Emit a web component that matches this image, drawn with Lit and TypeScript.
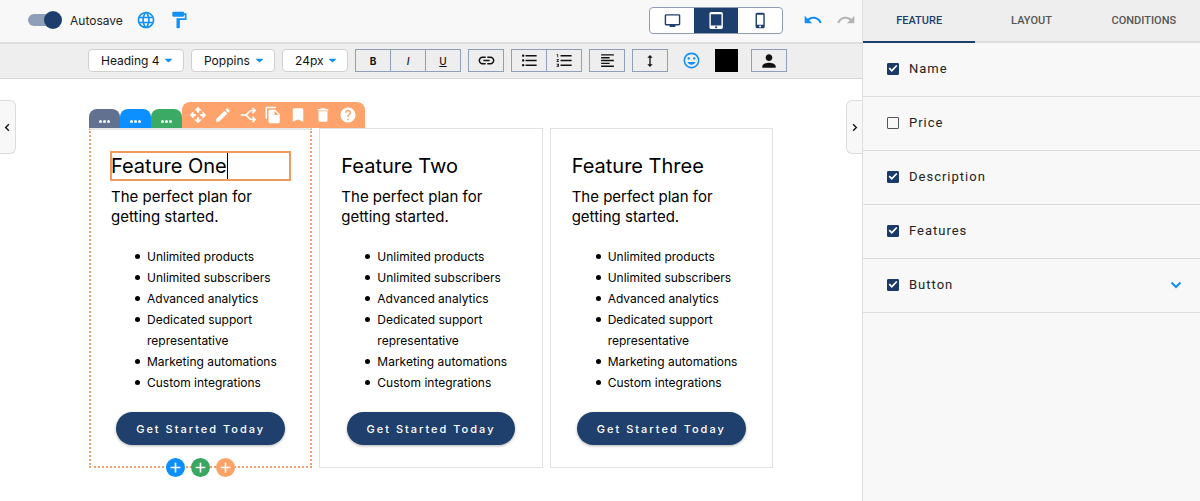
import { LitElement, html, css, svg, nothing } from "lit";
import { customElement, property, state } from "lit/decorators.js";
import { classMap } from "lit/directives/class-map.js";

const paths: Record<string, string> = {
  globe:
    "M11.99 2C6.47 2 2 6.48 2 12s4.47 10 9.99 10C17.52 22 22 17.52 22 12S17.52 2 11.99 2zm6.93 6h-2.95c-.32-1.25-.78-2.45-1.38-3.56 1.84.63 3.37 1.91 4.33 3.56zM12 4.04c.83 1.2 1.48 2.53 1.91 3.96h-3.82c.43-1.43 1.08-2.76 1.91-3.96zM4.26 14C4.1 13.36 4 12.69 4 12s.1-1.36.26-2h3.38c-.08.66-.14 1.32-.14 2 0 .68.06 1.34.14 2H4.26zm.82 2h2.95c.32 1.25.78 2.45 1.38 3.56-1.84-.63-3.37-1.9-4.33-3.56zm2.95-8H5.08c.96-1.66 2.49-2.93 4.33-3.56C8.81 5.55 8.35 6.75 8.03 8zM12 19.96c-.83-1.2-1.48-2.53-1.91-3.96h3.82c-.43 1.43-1.08 2.76-1.91 3.96zM14.34 14H9.66c-.09-.66-.16-1.32-.16-2 0-.68.07-1.35.16-2h4.68c.09.65.16 1.32.16 2 0 .68-.07 1.34-.16 2zm.25 5.56c.6-1.11 1.06-2.31 1.38-3.56h2.95c-.96 1.65-2.49 2.93-4.33 3.56zM16.36 14c.08-.66.14-1.32.14-2 0-.68-.06-1.34-.14-2h3.38c.16.64.26 1.31.26 2s-.1 1.36-.26 2h-3.38z",
  paint:
    "M18 4V3c0-.55-.45-1-1-1H5c-.55 0-1 .45-1 1v4c0 .55.45 1 1 1h12c.55 0 1-.45 1-1V6h1v4H9v11c0 .55.45 1 1 1h2c.55 0 1-.45 1-1v-9h8V4h-3z",
  undo: "M12.5 8c-2.65 0-5.05.99-6.9 2.6L2 7v9h9l-3.62-3.62c1.39-1.16 3.16-1.88 5.12-1.88 3.54 0 6.55 2.31 7.6 5.5l2.37-.78C21.08 11.03 17.15 8 12.5 8z",
  redo: "M18.4 10.6C16.55 8.99 14.15 8 11.5 8c-4.65 0-8.58 3.03-9.96 7.22L3.9 16c1.05-3.19 4.05-5.5 7.6-5.5 1.95 0 3.73.72 5.12 1.88L13 16h9V7l-3.6 3.6z",
  desktop:
    "M21 3H3c-1.1 0-2 .9-2 2v12c0 1.1.9 2 2 2h5v2h8v-2h5c1.1 0 2-.9 2-2V5c0-1.1-.9-2-2-2zm0 14H3V5h18v12z",
  tablet:
    "M18.5 0h-14C3.12 0 2 1.12 2 2.5v19C2 22.88 3.12 24 4.5 24h14c1.38 0 2.5-1.12 2.5-2.5v-19C21 1.12 19.88 0 18.5 0zm-7 23c-.83 0-1.5-.67-1.5-1.5s.67-1.5 1.5-1.5 1.5.67 1.5 1.5-.67 1.5-1.5 1.5zm7.5-4H4V3h15v16z",
  phone:
    "M15.5 1h-8C6.12 1 5 2.12 5 3.5v17C5 21.88 6.12 23 7.5 23h8c1.38 0 2.5-1.12 2.5-2.5v-17C18 2.12 16.88 1 15.5 1zm-4 21c-.83 0-1.5-.67-1.5-1.5s.67-1.5 1.5-1.5 1.5.67 1.5 1.5-.67 1.5-1.5 1.5zm4.5-4H7V4h9v14z",
  link: "M3.9 12c0-1.71 1.39-3.1 3.1-3.1h4V7H7c-2.76 0-5 2.24-5 5s2.24 5 5 5h4v-1.9H7c-1.71 0-3.1-1.39-3.1-3.1zM8 13h8v-2H8v2zm9-6h-4v1.9h4c1.71 0 3.1 1.39 3.1 3.1s-1.39 3.1-3.1 3.1h-4V17h4c2.76 0 5-2.24 5-5s-2.24-5-5-5z",
  bullets:
    "M4 10.5c-.83 0-1.5.67-1.5 1.5s.67 1.5 1.5 1.5 1.5-.67 1.5-1.5-.67-1.5-1.5-1.5zm0-6c-.83 0-1.5.67-1.5 1.5S3.17 7.5 4 7.5 5.5 6.83 5.5 6 4.83 4.5 4 4.5zm0 12c-.83 0-1.5.68-1.5 1.5s.68 1.5 1.5 1.5 1.5-.68 1.5-1.5-.67-1.5-1.5-1.5zM7 19h14v-2H7v2zm0-6h14v-2H7v2zm0-8v2h14V5H7z",
  numbers:
    "M2 17h2v.5H3v1h1v.5H2v1h3v-4H2v1zm1-9h1V4H2v1h1v3zm-1 3h1.8L2 13.1v.9h3v-1H3.2L5 10.9V10H2v1zm5-6v2h14V5H7zm0 14h14v-2H7v2zm0-6h14v-2H7v2z",
  align:
    "M15 15H3v2h12v-2zm0-8H3v2h12V7zM3 13h18v-2H3v2zm0 8h18v-2H3v2zM3 3v2h18V3H3z",
  height: "M13 6.99h3L12 3 8 6.99h3v10.02H8L12 21l4-3.99h-3z",
  smile:
    "M11.99 2C6.47 2 2 6.48 2 12s4.47 10 9.99 10C17.52 22 22 17.52 22 12S17.52 2 11.99 2zM12 20c-4.42 0-8-3.58-8-8s3.58-8 8-8 8 3.58 8 8-3.58 8-8 8zm3.5-9c.83 0 1.5-.67 1.5-1.5S16.33 8 15.5 8 14 8.67 14 9.5s.67 1.5 1.5 1.5zm-7 0c.83 0 1.5-.67 1.5-1.5S9.33 8 8.5 8 7 8.67 7 9.5 7.67 11 8.5 11zm3.5 6.5c2.33 0 4.31-1.46 5.11-3.5H6.89c.8 2.04 2.78 3.5 5.11 3.5z",
  person:
    "M12 12c2.21 0 4-1.79 4-4s-1.79-4-4-4-4 1.79-4 4 1.79 4 4 4zm0 2c-2.67 0-8 1.34-8 4v2h16v-2c0-2.66-5.33-4-8-4z",
  move: "M12 1l5 5h-3.5v3h-3V6H7zM12 23l-5-5h3.5v-3h3v3H17zM1 12l5-5v3.5h3v3H6V17zM23 12l-5 5v-3.5h-3v-3h3V7z",
  pencil:
    "M3 17.25V21h3.75L17.81 9.94l-3.75-3.75L3 17.25zM20.71 7.04c.39-.39.39-1.02 0-1.41l-2.34-2.34c-.39-.39-1.02-.39-1.41 0l-1.83 1.83 3.75 3.75 1.83-1.83z",
  copy: "M16 1H4c-1.1 0-2 .9-2 2v14h2V3h12V1zm-1 4l6 6v10c0 1.1-.9 2-2 2H7.99C6.89 23 6 22.1 6 21l.01-14c0-1.1.89-2 1.99-2h7zm-1 7h5.5L14 6.5V12z",
  bookmark: "M17 3H7c-1.1 0-1.99.9-1.99 2L5 21l7-3 7 3V5c0-1.1-.9-2-2-2z",
  trash:
    "M6 19c0 1.1.9 2 2 2h8c1.1 0 2-.9 2-2V7H6v12zM19 4h-3.5l-1-1h-5l-1 1H5v2h14V4z",
  help: "M12 2C6.48 2 2 6.48 2 12s4.48 10 10 10 10-4.48 10-10S17.52 2 12 2zm1 17h-2v-2h2v2zm2.07-7.75l-.9.92C13.45 12.9 13 13.5 13 15h-2v-.5c0-1.1.45-2.1 1.17-2.83l1.24-1.26c.37-.36.59-.86.59-1.41 0-1.1-.9-2-2-2s-2 .9-2 2H8c0-2.21 1.79-4 4-4s4 1.79 4 4c0 .88-.36 1.68-.93 2.25z",
  caret: "M4 7c-1.2 0-1.7 1.2-.8 2l7.2 7c.9.8 2.300.8 3.200 0l7.200-7c.9-.8.4-2-.8-2z",
};

const strokes: Record<string, string> = {
  split: "M2 12h6c4 0 4-6 9-6h4M8 12c4 0 4 6 9 6h4M18 2.5L21.5 6 18 9.5M18 14.5l3.5 3.5-3.5 3.5",
  left: "M15 5l-7 7 7 7",
  right: "M9 5l7 7-7 7",
  down: "M3 7l9 9 9-9",
  plus: "M12 3v18M3 12h18",
};

function icon(name: string, size: number, weight = 2.5) {
  return html`<svg width=${size} height=${size} viewBox="0 0 24 24" aria-hidden="true">
    ${name in paths
      ? svg`<path fill="currentColor" d=${paths[name]}></path>`
      : svg`<path fill="none" stroke="currentColor" stroke-width=${weight} d=${strokes[name]}></path>`}
  </svg>`;
}

const base = css`
  * {
    box-sizing: border-box;
  }
  svg {
    display: block;
    flex: none;
  }
  button {
    margin: 0;
    padding: 0;
    border: 0;
    background: none;
    color: inherit;
    font: inherit;
    cursor: pointer;
    display: flex;
    align-items: center;
    justify-content: center;
  }
`;

@customElement("top-bar")
class TopBar extends LitElement {
  @state() device = "tablet";

  static styles = [
    base,
    css`
      :host {
        display: flex;
        align-items: center;
        height: 44px;
        padding: 0 6px 2px 28px;
        background: #f8f8f8;
        border-bottom: 2px solid #dedede;
      }
      .autosave {
        display: flex;
        align-items: center;
        gap: 8px;
        font-size: 12px;
        color: #222;
      }
      .switch {
        appearance: none;
        position: relative;
        width: 34px;
        height: 18px;
        margin: 0;
      }
      .switch::before {
        content: "";
        position: absolute;
        inset: 3px 4px 3px 0;
        border-radius: 6px;
        background: #8e9fb7;
      }
      .switch::after {
        content: "";
        position: absolute;
        right: 0;
        top: 0;
        width: 18px;
        height: 18px;
        border-radius: 50%;
        background: #1e3f6e;
      }
      .switch:not(:checked)::after {
        right: 16px;
      }
      .tools {
        display: flex;
        gap: 13px;
        margin-left: 13px;
        color: #1290f5;
      }
      .devices {
        display: flex;
        margin-left: auto;
        border: 1px solid #8e9db5;
        border-radius: 4px;
        color: #1e3f6e;
        background: #fff;
        overflow: hidden;
      }
      .devices button {
        width: 44px;
        height: 25px;
      }
      .devices .on {
        background: #1c3f6e;
        color: #fff;
      }
      .history {
        display: flex;
        gap: 13px;
        margin-left: 20px;
        color: #1290f5;
      }
      .history button:disabled {
        color: #b5b5b5;
      }
    `,
  ];

  render() {
    return html`
      <label class="autosave"><input class="switch" type="checkbox" role="switch" checked />Autosave</label>
      <div class="tools">
        <button aria-label="Language">${icon("globe", 20)}</button>
        <button aria-label="Styles">${icon("paint", 20)}</button>
      </div>
      <div class="devices">
        ${["desktop", "tablet", "phone"].map(
          (d) => html`<button
            aria-label=${d}
            class=${classMap({ on: this.device === d })}
            @click=${() => (this.device = d)}
          >
            ${icon(d, 17)}
          </button>`
        )}
      </div>
      <div class="history">
        <button aria-label="Undo">${icon("undo", 20)}</button>
        <button aria-label="Redo" disabled>${icon("redo", 20)}</button>
      </div>
    `;
  }
}

@customElement("format-bar")
class FormatBar extends LitElement {
  static styles = [
    base,
    css`
      :host {
        display: flex;
        align-items: center;
        gap: 7px;
        height: 35px;
        padding: 0 74px 1px 88px;
        background: #eee;
        border-bottom: 1px solid #d6d6d6;
        color: #111;
      }
      .pick {
        display: grid;
        align-items: center;
      }
      .pick select,
      .pick svg {
        grid-area: 1 / 1;
      }
      .pick svg {
        justify-self: end;
        margin-right: 11px;
        color: #1290f5;
        pointer-events: none;
      }
      select {
        appearance: none;
        height: 23px;
        padding: 0 0 0 12px;
        border: 1px solid #cfcfcf;
        border-radius: 4px;
        background: #fff;
        color: #111;
        font: 12px/20px Inter, sans-serif;
      }
      .block {
        width: 96px;
      }
      .family {
        width: 84px;
      }
      .size {
        width: 66px;
      }
      .group {
        display: flex;
        border: 1px solid #8f9fb8;
      }
      .group button {
        width: 34px;
        height: 21px;
        font-size: 10px;
        font-weight: 500;
      }
      .group button + button {
        width: 35px;
        border-left: 1px solid #8f9fb8;
      }
      .group .bold {
        font-weight: 700;
      }
      .italic {
        font-style: italic;
      }
      .under {
        text-decoration: underline;
      }
      .emoji {
        margin: 0 7px;
        color: #1290f5;
      }
      .color {
        width: 23px;
        height: 23px;
        margin-right: 6px;
        background: #000;
      }
    `,
  ];

  pick(kind: string, label: string, value: string) {
    return html`<span class="pick">
      <select class=${kind} aria-label=${label}>
        <option>${value}</option>
      </select>
      ${icon("caret", 9)}
    </span>`;
  }

  tool(label: string, name: string, size = 19) {
    return html`<button aria-label=${label}>${icon(name, size)}</button>`;
  }

  render() {
    return html`
      ${this.pick("block", "Block style", "Heading 4")} ${this.pick("family", "Font", "Poppins")}
      ${this.pick("size", "Font size", "24px")}
      <div class="group">
        <button class="bold">B</button>
        <button class="italic">I</button>
        <button class="under">U</button>
      </div>
      <div class="group">${this.tool("Link", "link")}</div>
      <div class="group">${this.tool("Bulleted list", "bullets")}${this.tool("Numbered list", "numbers")}</div>
      <div class="group">${this.tool("Align", "align", 17)}</div>
      <div class="group">${this.tool("Line height", "height", 16)}</div>
      <button class="emoji" aria-label="Emoji">${icon("smile", 19)}</button>
      <button class="color" aria-label="Text colour"></button>
      <div class="group">${this.tool("Personalise", "person", 20)}</div>
    `;
  }
}

@customElement("plan-card")
class PlanCard extends LitElement {
  @property() name = "";
  @property({ type: Boolean }) selected = false;

  static styles = [
    base,
    css`
      :host {
        display: block;
        position: relative;
        padding: 23px 21px 22px;
        border: 1px solid #e2e2e2;
        background: #fff;
        color: #000;
      }
      :host([selected]) {
        padding: 22px 20px 21px;
        border: 2px dotted #f0a070;
        border-top-color: #e8e8e8;
        border-top-style: solid;
      }
      .name {
        margin: 0 0 7px;
        font-size: 20px;
        font-weight: 400;
        line-height: 28px;
      }
      .editing {
        display: flex;
        align-items: center;
        outline: 2px solid #f09a60;
        outline-offset: -1px;
      }
      .cursor {
        width: 1px;
        height: 26px;
        background: #000;
      }
      .text {
        margin: 0 0 19px;
        font-size: 15px;
        line-height: 20px;
        max-width: 152px;
      }
      ul {
        margin: 0 0 19px;
        padding: 0 0 0 36px;
        list-style: none;
        font-size: 12px;
        line-height: 21px;
      }
      li {
        display: flex;
        gap: 7px;
        margin-left: -12px;
      }
      li::before {
        content: "";
        flex: none;
        width: 5px;
        height: 5px;
        margin-top: 8px;
        border-radius: 50%;
        background: #000;
      }
      .cta {
        height: 33px;
        padding: 0 20px;
        margin: 0 auto;
        border-radius: 17px;
        background: #1f3f6c;
        color: #fff;
        font-size: 11px;
        font-weight: 500;
        letter-spacing: 2px;
        white-space: nowrap;
        box-shadow: 0 1px 3px rgba(0, 0, 0, 0.3);
      }
      .adders {
        position: absolute;
        left: 0;
        right: 0;
        bottom: -11px;
        display: flex;
        justify-content: center;
        gap: 6px;
        color: #fff;
      }
      .adders button {
        width: 19px;
        height: 19px;
        border-radius: 50%;
      }
      .row {
        background: #0c90ff;
      }
      .column {
        background: #3aa660;
      }
      .element {
        background: #ffa268;
      }
    `,
  ];

  render() {
    return html`
      ${this.selected
        ? html`<h4 class="name editing" contenteditable="true" spellcheck="false">${this.name}<span class="cursor"></span></h4>`
        : html`<h4 class="name">${this.name}</h4>`}
      <p class="text">The perfect plan for getting started.</p>
      <ul>
        ${[
          "Unlimited products",
          "Unlimited subscribers",
          "Advanced analytics",
          "Dedicated support representative",
          "Marketing automations",
          "Custom integrations",
        ].map((t) => html`<li>${t}</li>`)}
      </ul>
      <button class="cta">Get Started Today</button>
      ${this.selected
        ? html`<div class="adders">
            ${["row", "column", "element"].map(
              (k) => html`<button class=${k} aria-label="Add ${k}">${icon("plus", 13, 3)}</button>`
            )}
          </div>`
        : nothing}
    `;
  }
}

@customElement("side-panel")
class SidePanel extends LitElement {
  static styles = [
    base,
    css`
      :host {
        display: block;
        background: #f8f8f8;
        border-left: 1px solid #dedede;
        font-family: Roboto, sans-serif;
      }
      .tabs {
        display: grid;
        grid-template-columns: repeat(3, 1fr);
        height: 43px;
        background: #eee;
      }
      .tabs button {
        border-bottom: 2px solid #dedede;
        color: #555;
        font-size: 11px;
        font-weight: 500;
      }
      .tabs .on {
        border-bottom-color: #1c3f6e;
        color: #1c3f6e;
      }
      .row {
        display: flex;
        align-items: center;
        justify-content: space-between;
        height: 54px;
        padding: 0 18px 2px 24px;
        border-bottom: 1px solid #dcdcdc;
      }
      label {
        display: flex;
        align-items: center;
        gap: 10px;
        font-size: 13px;
        letter-spacing: 1px;
        color: #222;
      }
      input {
        appearance: none;
        width: 12px;
        height: 12px;
        margin: 0;
        border: 1px solid #555;
        border-radius: 1px;
        display: grid;
      }
      input:checked {
        border-color: #1a3a6a;
        background: #1a3a6a;
      }
      input:checked::before {
        content: "";
        background: #fff;
        clip-path: polygon(6% 52%, 18% 40%, 38% 60%, 82% 14%, 94% 26%, 38% 84%);
      }
      .more {
        color: #1290f5;
      }
    `,
  ];

  render() {
    return html`
      <div class="tabs" role="tablist">
        <button class="on" role="tab" aria-selected="true">FEATURE</button>
        <button role="tab">LAYOUT</button>
        <button role="tab">CONDITIONS</button>
      </div>
      ${["Name", "Price", "Description", "Features", "Button"].map(
        (name) => html`<div class="row">
          <label><input type="checkbox" ?checked=${name !== "Price"} />${name}</label>
          ${name === "Button"
            ? html`<button class="more" aria-label="Button options">${icon("down", 12, 4)}</button>`
            : nothing}
        </div>`
      )}
    `;
  }
}

@customElement("app-root")
class AppRoot extends LitElement {
  static styles = [
    base,
    css`
      :host {
        display: grid;
        grid-template-columns: minmax(0, 1fr) 338px;
        min-height: 100vh;
        background: #fff;
        font-family: Inter, sans-serif;
      }
      main {
        min-width: 0;
      }
      .canvas {
        position: relative;
        padding: 23px 89px 24px;
      }
      .drawer {
        position: absolute;
        top: 21px;
        width: 16px;
        height: 54px;
        border: 1px solid #dcdcdc;
        background: #f8f8f8;
        color: #111;
      }
      .first {
        left: 0;
        border-left: 0;
        border-radius: 0 6px 6px 0;
      }
      .last {
        right: 0;
        border-right: 0;
        border-radius: 6px 0 0 6px;
      }
      .strip {
        display: flex;
        align-items: flex-end;
        height: 26px;
        color: #fff;
      }
      .tab {
        width: 31px;
        height: 19px;
        padding-top: 5px;
        border-radius: 8px 8px 0 0;
        gap: 1px;
      }
      .tab i {
        width: 3px;
        height: 3px;
        border-radius: 50%;
        background: #fff;
      }
      .section {
        background: #62718f;
      }
      .row {
        background: #0c90ff;
      }
      .column {
        background: #3aaa64;
      }
      .actions {
        display: flex;
        align-items: center;
        gap: 7px;
        height: 26px;
        padding: 0 8px 0 7px;
        border-radius: 8px 8px 0 0;
        background: #ffa36c;
      }
      .plans {
        display: grid;
        grid-template-columns: repeat(3, minmax(0, 1fr));
        gap: 7px;
      }
    `,
  ];

  render() {
    return html`
      <main>
        <top-bar></top-bar>
        <format-bar></format-bar>
        <section class="canvas">
          <button class="drawer first" aria-label="Open left drawer">${icon("left", 11, 3)}</button>
          <button class="drawer last" aria-label="Close right drawer">${icon("right", 11, 3)}</button>
          <div class="strip">
            ${["section", "row", "column"].map(
              (k) => html`<button class="tab ${k}" aria-label="${k} menu"><i></i><i></i><i></i></button>`
            )}
            <div class="actions">
              ${["move", "pencil", "split", "copy", "bookmark", "trash", "help"].map(
                (k) => html`<button aria-label=${k}>${icon(k, 18, 2.2)}</button>`
              )}
            </div>
          </div>
          <div class="plans">
            <plan-card name="Feature One" selected></plan-card>
            <plan-card name="Feature Two"></plan-card>
            <plan-card name="Feature Three"></plan-card>
          </div>
        </section>
      </main>
      <side-panel></side-panel>
    `;
  }
}
